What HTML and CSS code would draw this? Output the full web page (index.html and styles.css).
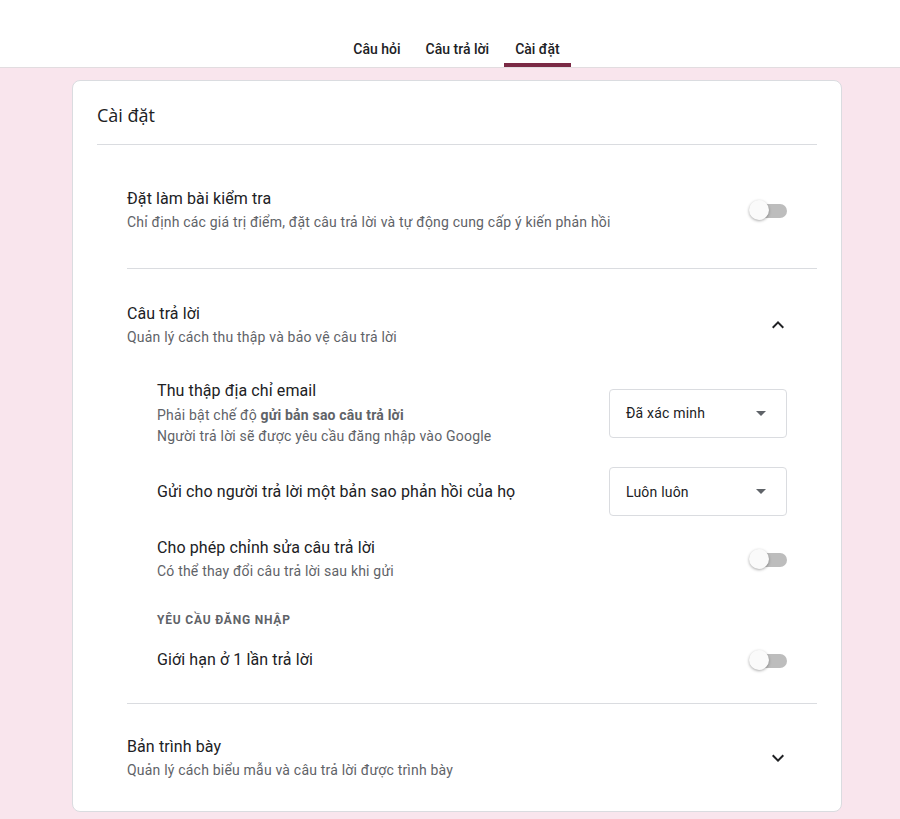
FILE: index.html
```html
<!DOCTYPE html>
<html lang="vi">
<head>
<meta charset="utf-8">
<title>Cài đặt</title>
<link rel="stylesheet" href="styles.css">
</head>
<body>
<header class="topbar">
  <nav class="tabs">
    <a class="tab">Câu hỏi</a>
    <a class="tab">Câu trả lời</a>
    <a class="tab active">Cài đặt</a>
  </nav>
</header>

<main class="card">
  <div class="card-head">Cài đặt</div>

  <section class="section first">
    <div class="row">
      <div class="text">
        <div class="title">Đặt làm bài kiểm tra</div>
        <div class="desc">Chỉ định các giá trị điểm, đặt câu trả lời và tự động cung cấp ý kiến phản hồi</div>
      </div>
      <div class="toggle"><span class="track"></span><span class="thumb"></span></div>
    </div>
  </section>

  <section class="section">
    <div class="row">
      <div class="text">
        <div class="title">Câu trả lời</div>
        <div class="desc">Quản lý cách thu thập và bảo vệ câu trả lời</div>
      </div>
      <svg class="chev" viewBox="0 0 24 24" width="24" height="24"><path d="M12 8l-6 6 1.41 1.41L12 10.83l4.59 4.58L18 14z"/></svg>
    </div>

    <div class="subs">
      <div class="row sub">
        <div class="text">
          <div class="title">Thu thập địa chỉ email</div>
          <div class="desc two">Phải bật chế độ <b>gửi bản sao câu trả lời</b><br>Người trả lời sẽ được yêu cầu đăng nhập vào Google</div>
        </div>
        <div class="select"><span>Đã xác minh</span><span class="caret"></span></div>
      </div>

      <div class="row sub">
        <div class="text">
          <div class="title">Gửi cho người trả lời một bản sao phản hồi của họ</div>
        </div>
        <div class="select"><span>Luôn luôn</span><span class="caret"></span></div>
      </div>

      <div class="row sub">
        <div class="text">
          <div class="title">Cho phép chỉnh sửa câu trả lời</div>
          <div class="desc">Có thể thay đổi câu trả lời sau khi gửi</div>
        </div>
        <div class="toggle"><span class="track"></span><span class="thumb"></span></div>
      </div>

      <div class="label">YÊU CẦU ĐĂNG NHẬP</div>

      <div class="row sub">
        <div class="text">
          <div class="title">Giới hạn ở 1 lần trả lời</div>
        </div>
        <div class="toggle"><span class="track"></span><span class="thumb"></span></div>
      </div>
    </div>
  </section>

  <section class="section last">
    <div class="row">
      <div class="text">
        <div class="title">Bản trình bày</div>
        <div class="desc">Quản lý cách biểu mẫu và câu trả lời được trình bày</div>
      </div>
      <svg class="chev" viewBox="0 0 24 24" width="24" height="24"><path d="M16.59 8.59L12 13.17 7.41 8.59 6 10l6 6 6-6z"/></svg>
    </div>
  </section>
</main>
</body>
</html>
```

FILE: styles.css
```css
* { box-sizing: border-box; }

html, body {
  margin: 0;
  padding: 0;
}

body {
  background: #f9e5ed;
  font-family: Roboto, "Liberation Sans", Arial, sans-serif;
  color: #202124;
  height: 819px;
  overflow: hidden;
}

.topbar {
  background: #fff;
  height: 68px;
  border-bottom: 1px solid #e2dde0;
  display: flex;
  justify-content: center;
  padding-left: 14px;
}

.tabs {
  display: flex;
  gap: 5px;
  height: 100%;
}

.tab {
  font-family: Roboto, "Open Sans", sans-serif;
  font-weight: 500;
  font-size: 14px;
  letter-spacing: 0;
  color: #202124;
  padding: 39px 10px 0;
  line-height: 20px;
  border-bottom: 4px solid transparent;
}

.tab.active {
  border-bottom-color: #7b2a45;
  border-radius: 3px 3px 0 0;
  padding-left: 11px;
  padding-right: 11px;
}

.card {
  margin: 12px 0 0 72px;
  width: 770px;
  background: #fff;
  border: 1px solid #dadce0;
  border-radius: 8px;
}

.card-head {
  font-family: "Open Sans", Roboto, sans-serif;
  font-size: 18px;
  line-height: 24px;
  color: #202124;
  margin: 0 24px;
  padding: 22px 0 17px;
  border-bottom: 1px solid #dadce0;
}

.section {
  margin: 0 24px 0 54px;
  padding: 33px 30px 31px 0;
  border-bottom: 1px solid #dadce0;
}

.section.first {
  padding-top: 42px;
  padding-bottom: 35px;
}

.section.last {
  border-bottom: none;
  padding-top: 31px;
  padding-bottom: 30px;
}

.row {
  display: flex;
  align-items: center;
  justify-content: space-between;
}

.title {
  font-size: 16px;
  line-height: 24px;
  letter-spacing: 0.1px;
  color: #202124;
}

.desc {
  font-size: 14px;
  line-height: 21px;
  letter-spacing: 0.2px;
  margin-top: 1px;
  color: #5f6368;
}

.desc.two {
  margin-top: 2px;
}

.desc b {
  font-weight: 700;
  color: #5f6368;
}

.subs {
  margin-top: 31px;
  padding-left: 30px;
  display: flex;
  flex-direction: column;
  gap: 20px;
}

.label {
  font-size: 12px;
  line-height: 16px;
  font-weight: 700;
  letter-spacing: 0.8px;
  color: #5f6368;
  margin-top: 10px;
}

.toggle {
  position: relative;
  width: 38px;
  height: 21px;
  flex: none;
}

.toggle .track {
  position: absolute;
  left: 2px;
  right: 0;
  top: 4px;
  height: 14px;
  border-radius: 7px;
  background: #bdbdbd;
}

.toggle .thumb {
  position: absolute;
  left: 0;
  top: 0;
  width: 20px;
  height: 20px;
  border-radius: 50%;
  background: #fafafa;
  box-shadow: 0 1px 3px rgba(0,0,0,0.35);
}

.chev {
  fill: #202124;
  margin-right: -3px;
  flex: none;
}

.select {
  flex: none;
  width: 178px;
  height: 49px;
  border: 1px solid #dadce0;
  border-radius: 4px;
  display: flex;
  align-items: center;
  justify-content: space-between;
  padding: 0 20px 0 16px;
  font-size: 14px;
  letter-spacing: 0.2px;
  color: #202124;
}

.caret {
  width: 0;
  height: 0;
  border-left: 5px solid transparent;
  border-right: 5px solid transparent;
  border-top: 5px solid #5f6368;
}
```
